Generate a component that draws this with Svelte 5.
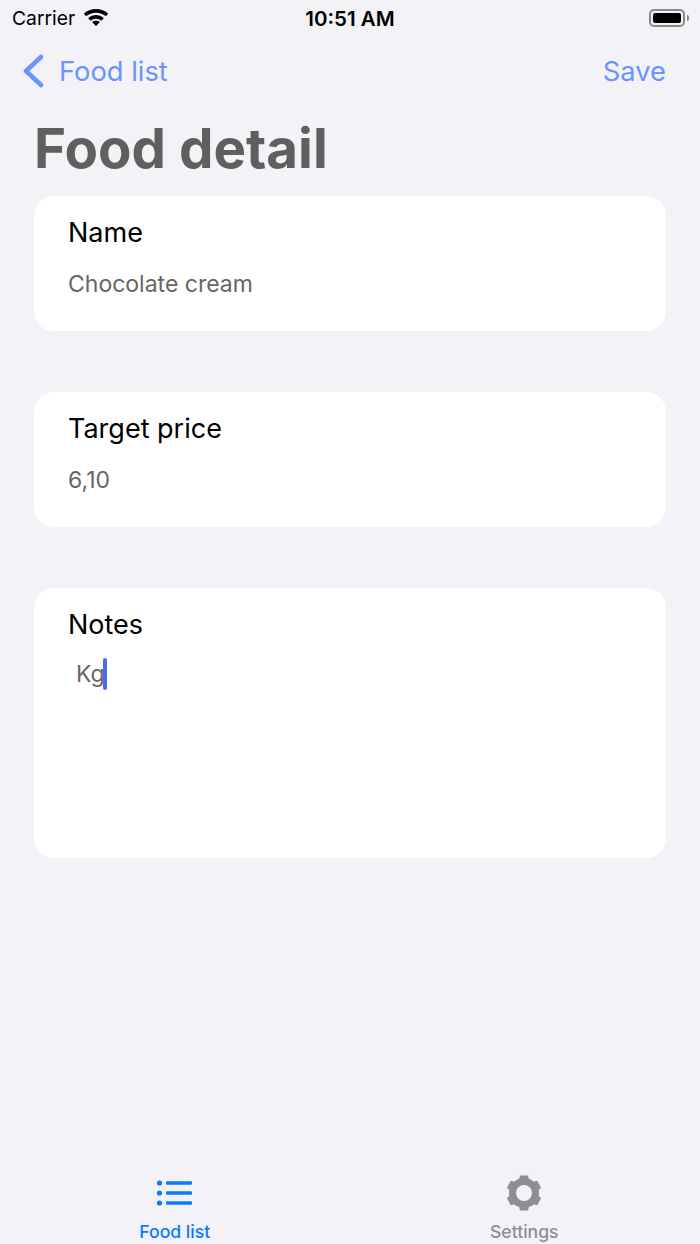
<script>
  const fields = [
    { label: 'Name', value: 'Chocolate cream' },
    { label: 'Target price', value: '6,10' }
  ];
  const teeth = [0, 60, 120, 180, 240, 300];
</script>

<div class="screen">
  <div class="status">
    <div class="status-left">
      <span class="carrier">Carrier</span>
      <svg class="wifi" width="26" height="19" viewBox="0 0 26 19">
        <path d="M2 8C8 2.500 18 2.500 24 8" fill="none" stroke="#000" stroke-width="3.600" />
        <path d="M6.300 12.300C10 9 16 9 19.700 12.300" fill="none" stroke="#000" stroke-width="3.600" />
        <path d="M13 19L9.100 15.100A5.500 5.500 0 0 1 16.900 15.100Z" fill="#000" />
      </svg>
    </div>
    <span class="time">10:51 AM</span>
    <div class="battery"><div class="battery-fill"></div></div>
  </div>

  <div class="nav">
    <div class="back">
      <svg width="22" height="34" viewBox="0 0 22 34">
        <path d="M19 3 L4 17 L19 31" fill="none" stroke="#6a94ff" stroke-width="4.500" stroke-linecap="round" stroke-linejoin="round" />
      </svg>
      <span>Food list</span>
    </div>
    <span class="save">Save</span>
  </div>

  <h1>Food detail</h1>

  <main>
    {#each fields as field}
      <section class="card">
        <div class="label">{field.label}</div>
        <div class="value">{field.value}</div>
      </section>
    {/each}
    <section class="card notes">
      <div class="label">Notes</div>
      <div class="note-text">Kg<span class="caret"></span></div>
    </section>
  </main>

  <nav class="tabs">
    <div class="tab active">
      <svg width="38" height="38" viewBox="0 0 38 38">
        <g fill="#0a7aff">
          <circle cx="3.500" cy="9" r="2.600" />
          <circle cx="3.500" cy="19" r="2.600" />
          <circle cx="3.500" cy="29" r="2.600" />
          <rect x="10" y="7.200" width="26" height="3.600" rx="1" />
          <rect x="10" y="17.200" width="26" height="3.600" rx="1" />
          <rect x="10" y="27.200" width="26" height="3.600" rx="1" />
        </g>
      </svg>
      <span>Food list</span>
    </div>
    <div class="tab">
      <svg width="38" height="38" viewBox="0 0 38 38">
        <circle cx="19" cy="19" r="11.500" fill="none" stroke="#8e8e93" stroke-width="7" />
        {#each teeth as a}
          <path d="M15 1.500h8l1.500 6h-11z" fill="#8e8e93" transform="rotate({a} 19 19)" />
        {/each}
      </svg>
      <span>Settings</span>
    </div>
  </nav>
</div>

<style>
  :global(body) {
    margin: 0;
    background: #f2f2f7;
  }

  .screen {
    height: 1244px;
    display: flex;
    flex-direction: column;
    background: #f2f2f7;
    font-family: Inter, "Liberation Sans", sans-serif;
    color: #000;
    overflow: hidden;
  }

  .status {
    height: 36px;
    display: flex;
    align-items: center;
    justify-content: space-between;
    padding: 0 15px 0 12px;
    position: relative;
  }

  .status-left {
    display: flex;
    align-items: center;
    gap: 8px;
  }

  .carrier {
    font-size: 19.300px;
  }

  .wifi {
    margin-top: -3px;
  }

  .time {
    font-size: 20.500px;
    font-weight: 600;
    position: absolute;
    left: 0;
    right: 0;
    top: 6px;
    text-align: center;
  }

  .battery {
    width: 36px;
    height: 18px;
    border: 2px solid #8a8a8a;
    border-radius: 5px;
    padding: 2px;
    box-sizing: border-box;
    position: relative;
  }

  .battery::after {
    content: '';
    position: absolute;
    right: -6px;
    top: 4px;
    width: 2px;
    height: 6px;
    background: #8a8a8a;
    border-radius: 0 2px 2px 0;
  }

  .battery-fill {
    height: 100%;
    background: #000;
    border-radius: 2px;
  }

  .nav {
    height: 70px;
    display: flex;
    align-items: center;
    justify-content: space-between;
    padding: 0 34px 0 22px;
    color: #6a94ff;
    font-size: 27.300px;
  }

  .back {
    display: flex;
    align-items: center;
    gap: 15px;
  }

  .back svg {
    flex: none;
  }

  h1 {
    margin: 12px 0 2px;
    padding-left: 34px;
    font-size: 54.700px;
    line-height: 60px;
    height: 60px;
    font-weight: 700;
    color: #5f5f5f;
  }

  main {
    flex: 1;
    display: flex;
    flex-direction: column;
    gap: 61px;
    padding: 16px 34px 0;
  }

  .card {
    background: #fff;
    border-radius: 20px;
    height: 135px;
    padding: 20px 34px 0;
    box-sizing: border-box;
  }

  .card.notes {
    height: 270px;
  }

  .label {
    font-size: 27px;
    line-height: 34px;
  }

  .value {
    font-size: 23px;
    line-height: 30px;
    color: #666;
    margin-top: 19px;
  }

  .note-text {
    font-size: 23px;
    line-height: 32px;
    color: #666;
    margin-top: 16px;
    padding-left: 8px;
    display: flex;
    align-items: center;
  }

  .caret {
    display: inline-block;
    width: 4px;
    height: 32px;
    background: #4a6bf0;
    border-radius: 2px;
    margin-left: -2px;
  }

  .tabs {
    height: 82px;
    display: grid;
    grid-template-columns: 1fr 1fr;
    padding-right: 1px;
  }

  .tab {
    display: flex;
    flex-direction: column;
    align-items: center;
    color: #8e8e93;
    font-size: 17.600px;
    font-weight: 500;
  }

  .tab svg {
    margin-top: 12px;
  }

  .tab span {
    line-height: 20px;
    margin-top: 10px;
  }

  .tab.active {
    color: #0a7aff;
  }
</style>
